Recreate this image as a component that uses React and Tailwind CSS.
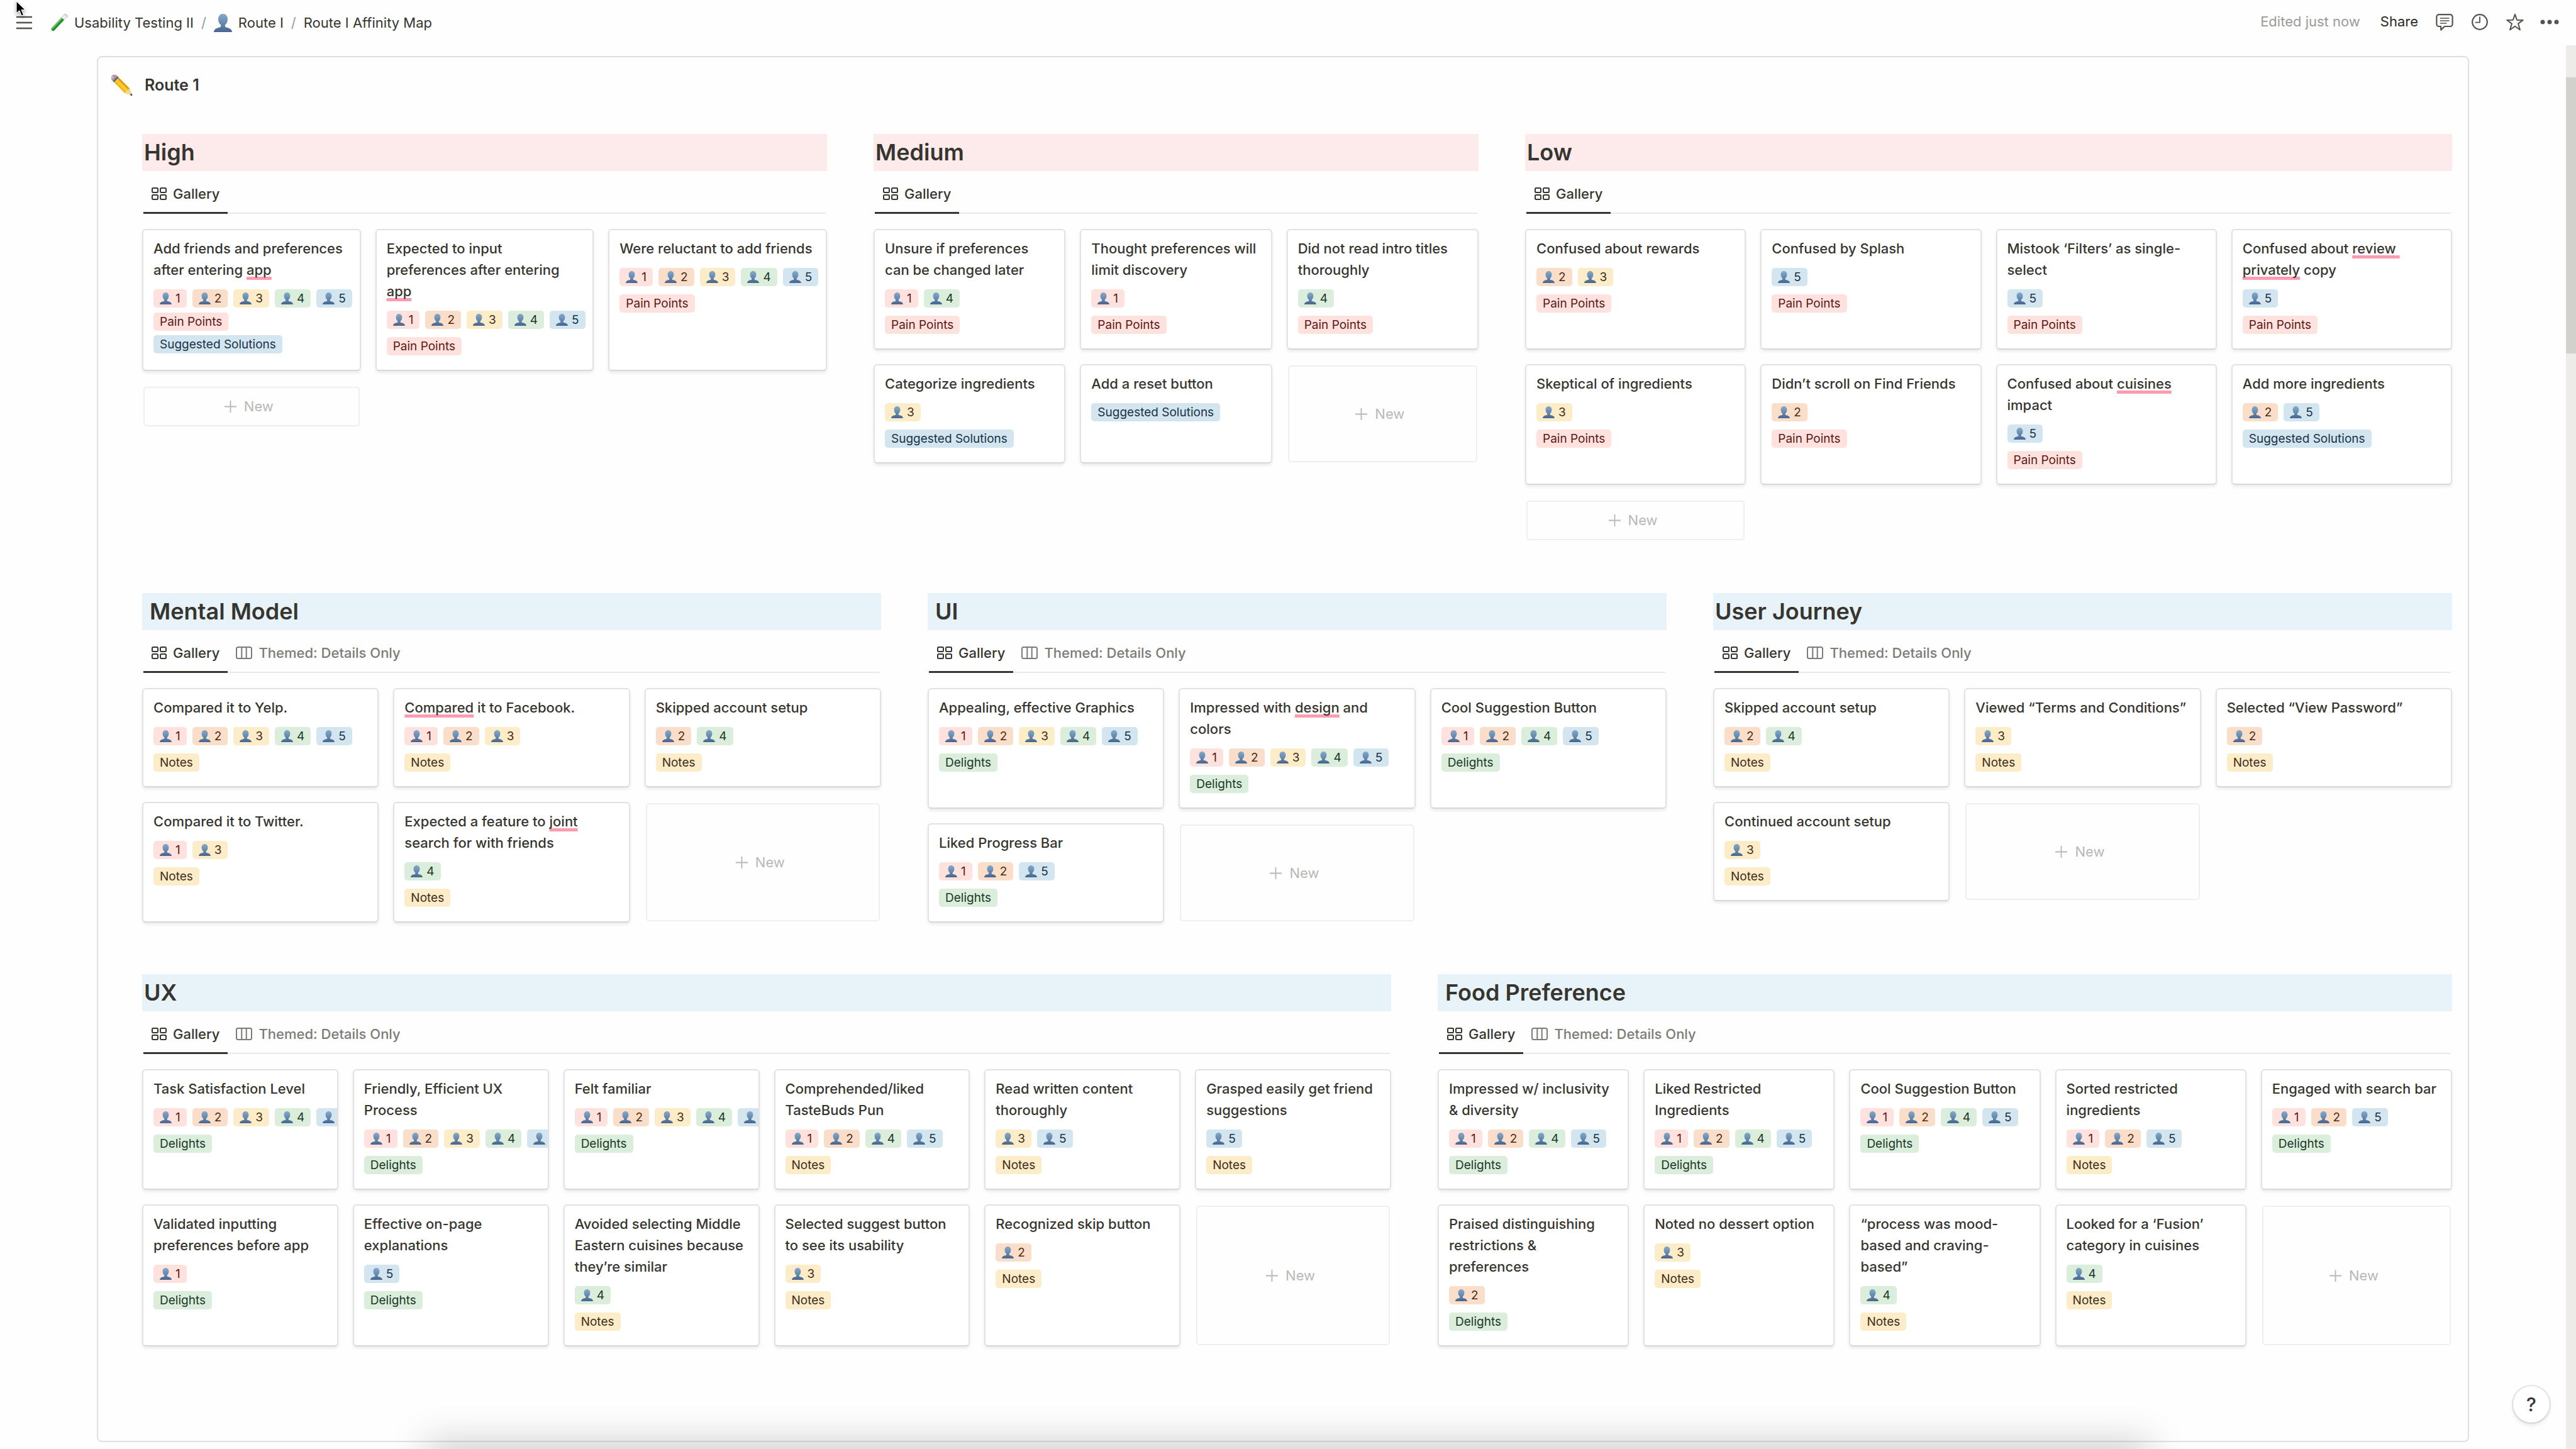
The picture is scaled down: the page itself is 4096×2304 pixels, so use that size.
import React from "react";

const TAG = {
  red: "bg-[#ffe2dd] text-[#5d1715]",
  orange: "bg-[#fadec9] text-[#49290e]",
  yellow: "bg-[#fdecc8] text-[#402c1b]",
  green: "bg-[#dbeddb] text-[#1c3829]",
  blue: "bg-[#d3e5ef] text-[#183347]",
};

const PERSON_TONE = { 1: "red", 2: "orange", 3: "yellow", 4: "green", 5: "blue" };

const LABELS = {
  pain: ["Pain Points", "red"],
  fix: ["Suggested Solutions", "blue"],
  note: ["Notes", "yellow"],
  joy: ["Delights", "green"],
};

const Miss = ({ children }) => (
  <span className="underline decoration-[#ff9bb0] decoration-[5px] underline-offset-[3px] [text-decoration-skip-ink:none]">
    {children}
  </span>
);

const ROWS = [
  {
    grid: "grid-cols-[1089fr_962fr_1474fr]",
    tone: "bg-[#fdebec]",
    sections: [
      {
        title: "High",
        cols: "grid-cols-3",
        cards: [
          [<>Add friends and preferences after entering <Miss>app</Miss></>, [1, 2, 3, 4, 5], ["pain", "fix"]],
          [<>Expected to input preferences after entering <Miss>app</Miss></>, [1, 2, 3, 4, 5], ["pain"]],
          ["Were reluctant to add friends", [1, 2, 3, 4, 5], ["pain"]],
        ],
      },
      {
        title: "Medium",
        cols: "grid-cols-3",
        cards: [
          ["Unsure if preferences can be changed later", [1, 4], ["pain"]],
          ["Thought preferences will limit discovery", [1], ["pain"]],
          ["Did not read intro titles thoroughly", [4], ["pain"]],
          ["Categorize ingredients", [3], ["fix"]],
          ["Add a reset button", [], ["fix"]],
        ],
      },
      {
        title: "Low",
        cols: "grid-cols-4",
        cards: [
          ["Confused about rewards", [2, 3], ["pain"]],
          ["Confused by Splash", [5], ["pain"]],
          ["Mistook ‘Filters’ as single-select", [5], ["pain"]],
          [<>Confused about <Miss>review{"\u00a0"}<wbr />privately</Miss> copy</>, [5], ["pain"]],
          ["Skeptical of ingredients", [3], ["pain"]],
          ["Didn’t scroll on Find Friends", [2], ["pain"]],
          [<>Confused about <Miss>cuisines</Miss> impact</>, [5], ["pain"]],
          ["Add more ingredients", [2, 5], ["fix"]],
        ],
      },
    ],
  },
  {
    grid: "grid-cols-3",
    tone: "bg-[#e7f3f8]",
    sections: [
      {
        title: "\u00a0Mental Model",
        themed: true,
        cols: "grid-cols-3",
        cards: [
          ["Compared it to Yelp.", [1, 2, 3, 4, 5], ["note"]],
          [<><Miss>Compared</Miss> it to Facebook.</>, [1, 2, 3], ["note"]],
          ["Skipped account setup", [2, 4], ["note"]],
          ["Compared it to Twitter.", [1, 3], ["note"]],
          [<>Expected a feature to <Miss>joint</Miss> search for with friends</>, [4], ["note"]],
        ],
      },
      {
        title: "\u00a0UI",
        themed: true,
        cols: "grid-cols-3",
        cards: [
          ["Appealing, effective Graphics", [1, 2, 3, 4, 5], ["joy"]],
          [<>Impressed with <Miss>design</Miss> and colors</>, [1, 2, 3, 4, 5], ["joy"]],
          ["Cool Suggestion Button", [1, 2, 4, 5], ["joy"]],
          ["Liked Progress Bar", [1, 2, 5], ["joy"]],
        ],
      },
      {
        title: "User Journey",
        themed: true,
        cols: "grid-cols-3",
        cards: [
          ["Skipped account setup", [2, 4], ["note"]],
          ["Viewed “Terms and Conditions”", [3], ["note"]],
          ["Selected “View Password”", [2], ["note"]],
          ["Continued account setup", [3], ["note"]],
        ],
      },
    ],
  },
  {
    grid: "grid-cols-[1986fr_1613fr]",
    tone: "bg-[#e7f3f8]",
    sections: [
      {
        title: "UX",
        themed: true,
        cols: "grid-cols-6",
        cards: [
          ["Task Satisfaction Level", [1, 2, 3, 4, 5], ["joy"]],
          ["Friendly, Efficient UX Process", [1, 2, 3, 4, 5], ["joy"]],
          ["Felt familiar", [1, 2, 3, 4, 5], ["joy"]],
          ["Comprehended/liked TasteBuds Pun", [1, 2, 4, 5], ["note"]],
          ["Read written content thoroughly", [3, 5], ["note"]],
          ["Grasped easily get friend suggestions", [5], ["note"]],
          ["Validated inputting preferences before app", [1], ["joy"]],
          ["Effective on-page explanations", [5], ["joy"]],
          ["Avoided selecting Middle Eastern cuisines because they’re similar", [4], ["note"]],
          ["Selected suggest button to see its usability", [3], ["note"]],
          ["Recognized skip button", [2], ["note"]],
        ],
      },
      {
        title: "\u00a0Food Preference",
        themed: true,
        cols: "grid-cols-5",
        cards: [
          ["Impressed w/ inclusivity & diversity", [1, 2, 4, 5], ["joy"]],
          ["Liked Restricted Ingredients", [1, 2, 4, 5], ["joy"]],
          ["Cool Suggestion Button", [1, 2, 4, 5], ["joy"]],
          ["Sorted restricted ingredients", [1, 2, 5], ["note"]],
          ["Engaged with search bar", [1, 2, 5], ["joy"]],
          ["Praised distinguishing restrictions & preferences", [2], ["joy"]],
          ["Noted no dessert option", [3], ["note"]],
          ["“process was mood-based and craving-based”", [4], ["note"]],
          ["Looked for a ‘Fusion’ category in cuisines", [4], ["note"]],
        ],
      },
    ],
  },
];

const Gradients = () => (
  <svg className="absolute size-0" aria-hidden="true">
    <defs>
      <linearGradient id="bust" x1="0" y1="0" x2="0" y2="1">
        <stop offset="0" stopColor="#86a9ca" />
        <stop offset="0.55" stopColor="#6388ae" />
        <stop offset="1" stopColor="#47648f" />
      </linearGradient>
      <linearGradient id="liquid" x1="0" y1="0" x2="1" y2="0">
        <stop offset="0" stopColor="#5fc24c" />
        <stop offset="0.5" stopColor="#2d9a2b" />
        <stop offset="1" stopColor="#1d7a20" />
      </linearGradient>
    </defs>
  </svg>
);

const Person = ({ className }) => (
  <svg viewBox="0 0 36 36" className={className} aria-hidden="true">
    <path
      fill="url(#bust)"
      d="M18 0C12.5 0 8.7 4.2 8.7 10.5c0 5 1.8 8.5 4.3 10.7.6.6 1 1.400 1 2.400 0 2-1.200 2.600-4 3.400C5 28.400.6 30 0 36h36c-.6-6-5-7.600-10-9-2.800-.8-4-1.400-4-3.400 0-1 .4-1.800 1-2.400 2.500-2.200 4.300-5.700 4.300-10.700C27.300 4.200 23.500 0 18 0Z"
    />
  </svg>
);

const TestTube = () => (
  <svg viewBox="0 0 36 36" className="size-[29px]" aria-hidden="true">
    <g transform="rotate(43 18 18)">
      <path d="M14.300-3h7.400v37.500a3.700 3.700 0 0 1-7.400 0Z" fill="#e9efec" stroke="#b9c2bd" strokeWidth=".8" />
      <path d="M14.600 6.500h6.800v28a3.400 3.400 0 0 1-6.800 0Z" fill="url(#liquid)" />
      <path d="M16.200 8v25" stroke="#a9e79a" strokeWidth="1.100" strokeLinecap="round" opacity=".8" />
      <rect x="12.600" y="-4.600" width="10.800" height="2.600" rx="1.300" fill="#dfe4e2" stroke="#aab3ae" strokeWidth=".6" />
    </g>
    <circle cx="31.500" cy="1.800" r="1.200" fill="#8fdc8a" />
    <circle cx="34.300" cy="5" r=".9" fill="#8fdc8a" />
  </svg>
);

const Pencil = () => (
  <svg viewBox="0 0 42 42" className="size-[34px]" aria-hidden="true">
    <g transform="rotate(-45 21 21) translate(-4.200 -1) scale(1.200 1.050)">
      <path d="M15.500-2.500c0-3.800 11-3.800 11 0V0h-11Z" fill="#e8818a" />
      <path d="M17.500-3.400c0-1.300 3.500-1.700 3.500-1.700V0h-3.500Z" fill="#f5a9ae" />
      <rect x="15.500" y="-.2" width="11" height="5.200" fill="#7f9fc0" />
      <rect x="15.500" y="3.300" width="11" height="2.800" fill="#56585c" />
      <rect x="15.500" y="6" width="3.500" height="29.500" fill="#f6b21a" />
      <rect x="19" y="6" width="4.300" height="29.500" fill="#ffcb1f" />
      <rect x="23.300" y="6" width="3.200" height="29.500" fill="#dc9a06" />
      <path d="M15.500 35.300c1.800-1.500 2.800-1 3.700 0 1.300-1.300 2.800-1.300 4 0 .9-1 2-1.300 3.300 0L21 48Z" fill="#f3d695" />
      <path d="M19.200 44 21 48.500l1.900-4.500Z" fill="#2b2b2b" />
    </g>
  </svg>
);

const GalleryIcon = () => (
  <svg viewBox="0 0 24 20" className="h-5 w-6" fill="none" stroke="currentColor" strokeWidth="2" aria-hidden="true">
    <rect x="1" y="1" width="9" height="7" rx="1.500" />
    <rect x="14" y="1" width="9" height="7" rx="1.500" />
    <rect x="1" y="12" width="9" height="7" rx="1.500" />
    <rect x="14" y="12" width="9" height="7" rx="1.500" />
  </svg>
);

const BoardIcon = () => (
  <svg viewBox="0 0 26 20" className="h-5 w-[26px]" fill="none" stroke="currentColor" strokeWidth="2" aria-hidden="true">
    <rect x="1" y="1" width="24" height="18" rx="2.500" />
    <path d="M9.300 1v18M16.700 1v18" />
  </svg>
);

const Plus = () => (
  <svg viewBox="0 0 19 19" className="size-[19px]" stroke="currentColor" strokeWidth="1.800" aria-hidden="true">
    <path d="M9.500 0v19M0 9.500h19" />
  </svg>
);

const Tag = ({ tone, children }) => (
  <span
    className={
      "flex h-[29px] shrink-0 items-center gap-[6px] rounded-[5px] px-[10px] text-[19px] leading-none whitespace-nowrap " +
      TAG[tone]
    }
  >
    {children}
  </span>
);

function Card({ title, people, labels }) {
  return (
    <article className="overflow-hidden rounded-[6px] border-2 border-[#e2e2e2] border-b-[#d8d8d8] bg-white px-4 pt-[12px] pb-[23px] shadow-[0_3px_5px_rgba(15,15,15,0.08)]">
      <h3 className="mb-[14px] text-[22px] leading-[34px] font-medium">{title}</h3>
      {people.length > 0 && (
        <div className={"flex gap-[9px] " + (labels.length > 1 ? "mb-2" : "mb-[13px]")}>
          {people.map((n) => (
            <Tag key={n} tone={PERSON_TONE[n]}>
              <Person className="size-[19px]" />
              {n}
            </Tag>
          ))}
        </div>
      )}
      <div className="flex flex-wrap gap-[7px]">
        {labels.map((l) => (
          <Tag key={l} tone={LABELS[l][1]}>
            {LABELS[l][0]}
          </Tag>
        ))}
      </div>
    </article>
  );
}

function Section({ section, tone }) {
  return (
    <section>
      <h2 className={"h-[59px] px-[3px] text-[36px] leading-[59px] font-semibold " + tone}>{section.title}</h2>
      <div role="tablist" className="mx-[2px] mb-6 flex h-[68px] items-stretch border-b-2 border-[#e9e9e8] text-[22px] font-medium">
        <button
          type="button"
          role="tab"
          aria-selected="true"
          className="-mb-[2px] flex items-center gap-[10px] border-b-[3px] border-[#37352f] px-[13px] pt-[7px]"
        >
          <GalleryIcon />
          Gallery
        </button>
        {section.themed && (
          <button
            type="button"
            role="tab"
            aria-selected="false"
            className="-mb-[2px] flex items-center gap-[10px] border-b-[3px] border-transparent px-[13px] pt-[7px] text-[#7d7b77]"
          >
            <BoardIcon />
            Themed: Details Only
          </button>
        )}
      </div>
      <div className={"grid gap-[23px] " + section.cols}>
        {section.cards.map(([title, people, labels], i) => (
          <Card key={i} title={title} people={people} labels={labels} />
        ))}
        <button
          type="button"
          className="m-[2px] flex min-h-[63px] items-center justify-center gap-3 rounded-[5px] border-2 border-[#efefee] pr-2 text-[22px] text-[#b9b8b6]"
        >
          <Plus />
          New
        </button>
      </div>
    </section>
  );
}

function TopBar() {
  return (
    <header className="flex h-[72px] shrink-0 items-center justify-between pr-[27px] pl-[26px] text-[22px]">
      <div className="flex items-center">
        <button type="button" aria-label="Open sidebar" className="mr-[28px]">
          <svg viewBox="0 0 25 22" className="h-[22px] w-[25px]" stroke="#55534e" strokeWidth="2.600" aria-hidden="true">
            <path d="M0 2h25M0 11h25M0 20h25" />
          </svg>
        </button>
        <nav aria-label="Breadcrumb" className="flex items-center">
          <a href="#testing" className="flex items-center gap-[10px]">
            <TestTube />
            Usability Testing II
          </a>
          <span className="mx-3 text-[#9b9a97]">/</span>
          <a href="#route" className="flex items-center gap-[10px]">
            <Person className="size-[29px]" />
            Route I
          </a>
          <span className="mx-3 text-[#9b9a97]">/</span>
          <a href="#map">Route I Affinity Map</a>
        </nav>
      </div>
      <div className="flex items-center pb-[3px] text-[#55534e]">
        <span className="mr-[32px] text-[#9b9a97]">Edited just now</span>
        <button type="button" className="mr-[28px] text-[#2b2a26]">Share</button>
        <button type="button" aria-label="Comments" className="mr-[29px]">
          <svg viewBox="0 0 28 28" className="size-7" fill="none" stroke="currentColor" strokeWidth="2.200" strokeLinejoin="round" aria-hidden="true">
            <path d="M5 2.200h18a3.600 3.600 0 0 1 3.600 3.600v11.600A3.600 3.600 0 0 1 23 21h-9l-5.800 5.600V21H5a3.600 3.600 0 0 1-3.600-3.600V5.800A3.600 3.600 0 0 1 5 2.200Z" />
            <path d="M7.300 8h13.700M7.300 12h13.700M7.300 16h9.600" strokeWidth="1.500" strokeLinecap="round" />
          </svg>
        </button>
        <button type="button" aria-label="Updates" className="mr-[29px]">
          <svg viewBox="0 0 26 26" className="size-[26px]" fill="none" stroke="currentColor" strokeWidth="2.200" aria-hidden="true">
            <circle cx="13" cy="13" r="11.800" />
            <path d="M13 5.200v8.400H6.400" strokeWidth="1.900" strokeLinecap="round" strokeLinejoin="round" />
          </svg>
        </button>
        <button type="button" aria-label="Favorite" className="mr-[26px]">
          <svg viewBox="0 0 28 28" className="size-7" fill="none" stroke="currentColor" strokeWidth="2" strokeLinejoin="round" aria-hidden="true">
            <path d="m14 1.800 3.100 8.900 9.700.2-7.700 5.700 2.900 9.900-8-5.700-8 5.700 2.900-9.900-7.700-5.700 9.700-.2Z" />
          </svg>
        </button>
        <button type="button" aria-label="More">
          <svg viewBox="0 0 30 8" className="h-2 w-[30px]" fill="currentColor" aria-hidden="true">
            <circle cx="4" cy="4" r="3.500" />
            <circle cx="15" cy="4" r="3.500" />
            <circle cx="26" cy="4" r="3.500" />
          </svg>
        </button>
      </div>
    </header>
  );
}

export default function App() {
  return (
    <div className="relative flex min-h-screen flex-col overflow-hidden bg-[#fefefe] font-['Inter','Liberation_Sans',sans-serif] text-[#37352f]">
      <Gradients />
      <TopBar />
      <div className="flex flex-1">
        <main className="flex flex-1 flex-col px-[154px] pt-[17px] pb-[11px]">
          <div className="flex-1 rounded-[8px] border-2 border-[#e0e0df] pr-[25px] pl-[70px]">
            <h1 className="-ml-[49px] flex h-[90px] items-center gap-[19px] text-[25px] font-semibold">
              <Pencil />
              Route 1
            </h1>
            <div className="mt-8 flex flex-col gap-[82px]">
              {ROWS.map((row, i) => (
                <div key={i} className={"grid items-start gap-x-[74px] " + row.grid}>
                  {row.sections.map((s) => (
                    <Section key={s.title} section={s} tone={row.tone} />
                  ))}
                </div>
              ))}
            </div>
          </div>
        </main>
        <div className="w-4 shrink-0 bg-[#edece9] pt-[51px]" aria-hidden="true">
          <div className="h-[439px] bg-[#d3d1cb]" />
        </div>
      </div>

      <button
        type="button"
        aria-label="Help"
        className="absolute right-[42px] bottom-[42px] flex size-[58px] items-center justify-center rounded-full bg-white text-[30px] font-medium shadow-[0_0_0_2px_rgba(15,15,15,0.1),0_4px_7px_rgba(15,15,15,0.1)]"
      >
        ?
      </button>

      <div className="pointer-events-none absolute inset-x-1/6 top-full h-10 shadow-[0_0_64px_6px_rgba(0,0,0,0.24)]" />

      <svg viewBox="0 0 20 28" className="pointer-events-none absolute top-0 left-[24px] h-[28px] w-5 drop-shadow-[0_2px_2px_rgba(0,0,0,0.35)]" aria-hidden="true">
        <path d="M2 1.500v20l4.800-4.400 3.400 8.200 3.500-1.500-3.400-7.900h6.200Z" fill="#000" stroke="#fff" strokeWidth="1.200" />
      </svg>
    </div>
  );
}
